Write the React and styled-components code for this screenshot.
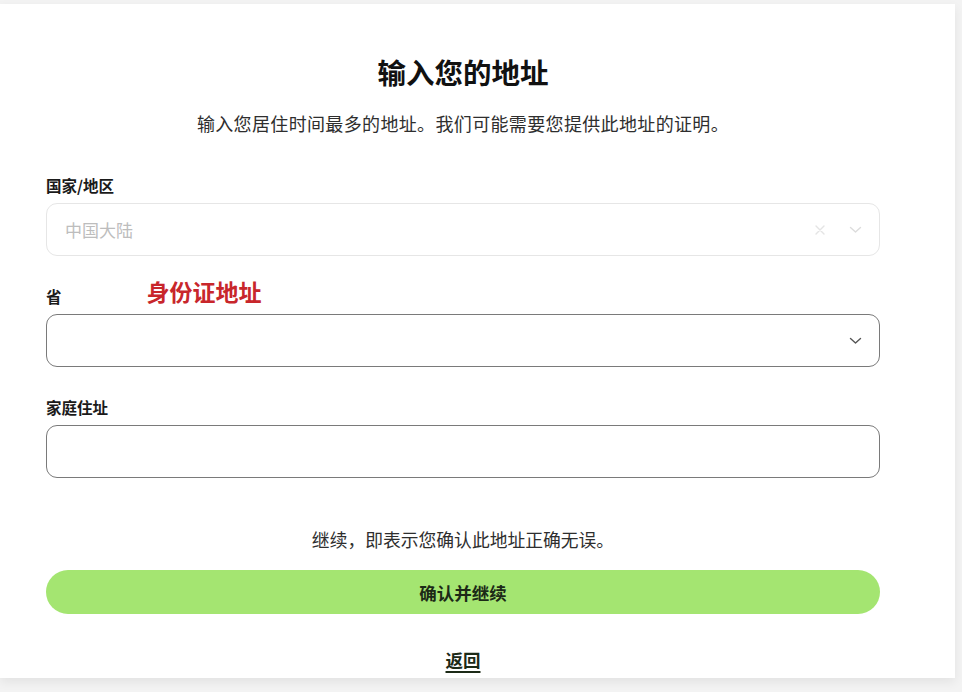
import React from 'react'
import styled, { createGlobalStyle } from "styled-components";

const GlobalStyle = createGlobalStyle`
  html, body {
    margin: 0;
    padding: 0;
    background: #f3f3f3;
    font-family: "Noto Sans CJK SC", "Noto Sans", "Liberation Sans", sans-serif;
  }
`

function Chevron({ color }) {
    return (
        <svg width="15" height="15" viewBox="0 0 15 15" fill="none">
            <path d="M2.5 5.5l5 4.5 5-4.5" stroke={color} strokeWidth="1.4" strokeLinecap="round" strokeLinejoin="round" />
        </svg>
    )
}

function Cross({ color }) {
    return (
        <svg width="14" height="14" viewBox="0 0 14 14" fill="none">
            <path d="M3 3l8 8M11 3l-8 8" stroke={color} strokeWidth="1.4" strokeLinecap="round" />
        </svg>
    )
}

function App() {
    return (
        <>
            <GlobalStyle />
            <Page>
                <Card>
                    <Title>输入您的地址</Title>
                    <Subtitle>输入您居住时间最多的地址。我们可能需要您提供此地址的证明。</Subtitle>

                    <Field>
                        <LabelRow>
                            <Label>国家/地区</Label>
                        </LabelRow>
                        <Box disabled>
                            <Placeholder>中国大陆</Placeholder>
                            <Icons>
                                <Cross color="#e4e4e4" />
                                <Chevron color="#dcdcdc" />
                            </Icons>
                        </Box>
                    </Field>

                    <Field>
                        <LabelRow>
                            <Label>省</Label>
                            <Note>身份证地址</Note>
                        </LabelRow>
                        <Box>
                            <span />
                            <Icons>
                                <Chevron color="#555" />
                            </Icons>
                        </Box>
                    </Field>

                    <Field>
                        <LabelRow>
                            <Label>家庭住址</Label>
                        </LabelRow>
                        <Box />
                    </Field>

                    <Consent>继续，即表示您确认此地址正确无误。</Consent>
                    <Submit>确认并继续</Submit>
                    <BackRow>
                        <Back>返回</Back>
                    </BackRow>
                </Card>
            </Page>
        </>
    )
}

export default App;

const Page = styled.div`
  min-height: 692px;
  padding-top: 4px;
  box-sizing: border-box;
`

const Card = styled.div`
  width: 955px;
  height: 674px;
  box-sizing: border-box;
  background: #fff;
  padding: 50px 0 0 46px;
  box-shadow: 0 4px 10px rgba(0, 0, 0, 0.07);
  display: flex;
  flex-direction: column;
  align-items: stretch;
  > * {
    width: 834px;
  }
`

const Title = styled.h1`
  margin: 0;
  font-size: 28.5px;
  line-height: 36px;
  font-weight: 700;
  color: #111;
  text-align: center;
`

const Subtitle = styled.p`
  margin: 20px 0 0;
  font-size: 18px;
  letter-spacing: 0.35px;
  line-height: 26px;
  color: #2e2e2e;
  text-align: center;
`

const Field = styled.div`
  margin-top: 29px;
  &:first-of-type {
    margin-top: 38px;
  }
`

const LabelRow = styled.div`
  height: 22px;
  display: flex;
  align-items: flex-end;
  margin-bottom: 7px;
`

const Label = styled.label`
  font-size: 15.5px;
  line-height: 22px;
  font-weight: 700;
  color: #1a1a1a;
`

const Note = styled.span`
  margin-left: 85px;
  font-size: 23px;
  line-height: 32px;
  font-weight: 600;
  color: #c8262b;
`

const Box = styled.div`
  height: 53px;
  box-sizing: border-box;
  border: 1px solid ${p => (p.disabled ? "#e6e6e6" : "#7a7a7a")};
  border-radius: 11px;
  padding: 0 16px 0 18px;
  display: flex;
  align-items: center;
  justify-content: space-between;
`

const Placeholder = styled.span`
  font-size: 17px;
  color: #bdbdbd;
`

const Icons = styled.div`
  display: flex;
  align-items: center;
  gap: 21px;
`

const Consent = styled.p`
  margin: 49px 0 0;
  font-size: 17.8px;
  line-height: 24px;
  color: #2e2e2e;
  text-align: center;
`

const Submit = styled.button`
  margin-top: 19px;
  height: 44px;
  border: none;
  border-radius: 22px;
  background: #a4e571;
  font-family: inherit;
  font-size: 17.5px;
  font-weight: 700;
  color: #1c2a17;
  cursor: pointer;
`

const BackRow = styled.div`
  margin-top: 34px;
  text-align: center;
  line-height: 24px;
`

const Back = styled.a`
  font-size: 17.5px;
  font-weight: 700;
  color: #1c2a17;
  text-decoration: underline;
  text-decoration-thickness: 2px;
  text-underline-offset: 4px;
`
